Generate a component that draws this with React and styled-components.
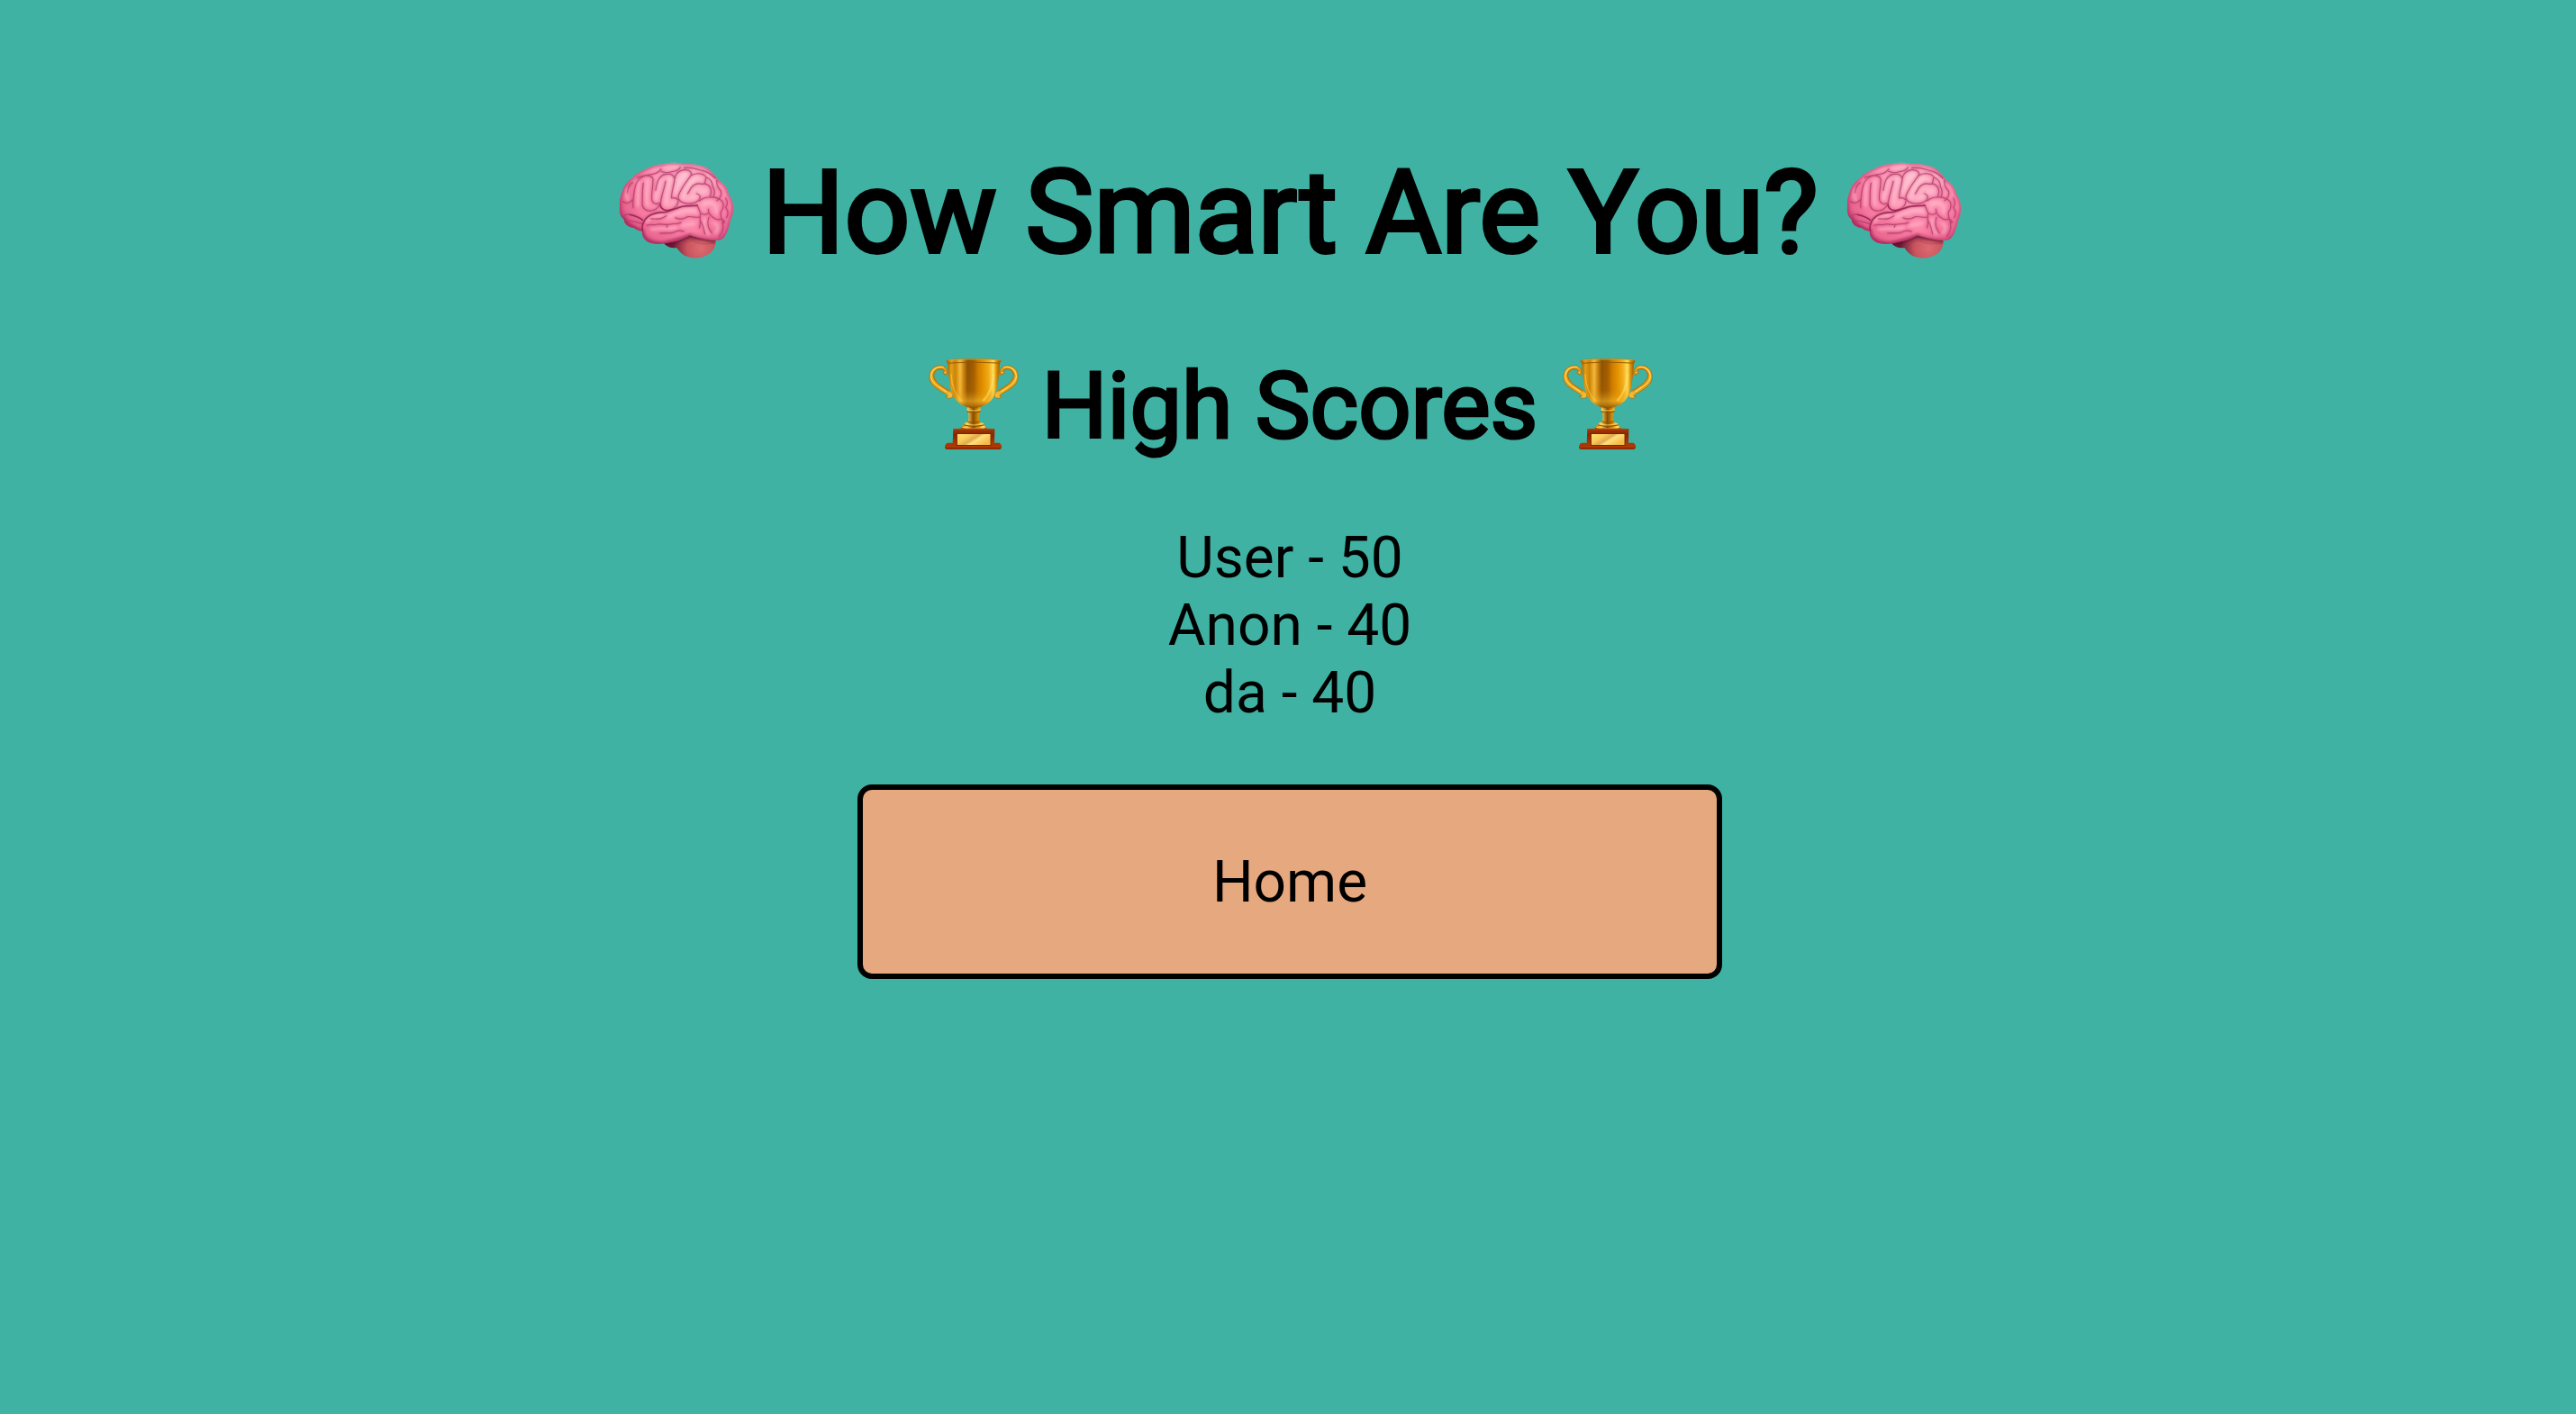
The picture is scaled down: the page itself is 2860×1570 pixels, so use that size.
import React from "react";
import styled, { createGlobalStyle } from "styled-components";

const GlobalStyle = createGlobalStyle`
  body {
    margin: 0;
    background: #3fb2a3;
    color: #000;
    font-family: Roboto, sans-serif;
    font-size: 64px;
    line-height: 75px;
  }
`;

const Page = styled.main`
  display: flex;
  flex-direction: column;
  align-items: center;
  box-sizing: border-box;
  min-height: 1570px;
  padding: 161px 0 0 4px;
`;

const Heading = styled.h1`
  margin: 0 0 ${(p) => p.$gap}px;
  padding-left: ${(p) => p.$indent || 0}px;
  font-size: ${(p) => p.$size}px;
  line-height: ${(p) => p.$line}px;
  font-weight: 400;
  white-space: nowrap;
  -webkit-text-stroke: 0.03125em #000;
`;

const Emoji = styled.svg`
  width: 1em;
  height: 1em;
  overflow: visible;
  vertical-align: ${(p) => p.$drop}em;
`;

const Scores = styled.ul`
  margin: 0 0 64px;
  padding: 0;
  list-style: none;
  text-align: center;
`;

const Score = styled.li`
  height: 75px;
`;

const HomeButton = styled.button`
  box-sizing: border-box;
  width: 960px;
  height: 216px;
  padding: 0;
  border: 6px solid #000;
  border-radius: 16px;
  background: #e6a87e;
  color: #000;
  font: inherit;
`;

const BRAIN =
  "M54 207C52 180 61 164 66 148C73 132 88 120 99 111C112 96 133 89 151 80C166 71 186 69 200 68C215 62 248 62 264 67C288 66 310 68 322 72C345 77 354 86 365 98C376 109 381 119 391 127C408 138 413 151 416 166C426 178 433 198 432 218C433 237 424 251 421 263C417 284 410 302 401 312C393 320 384 322 373 321C343 322 309 310 288 305C264 319 236 326 211 330C188 336 163 335 147 326C132 317 127 302 129 290C121 293 111 286 101 280C84 279 69 269 68 251C54 244 53 224 54 207Z";

const CEREBELLUM =
  "M201 331C215 328 259 315 286 298C320 308 349 316 374 318C375 344 365 361 345 371C329 380 307 384 287 378C266 374 254 361 244 346C229 349 210 344 201 331Z";

const FOLDS = [
  "M67 251C64 236 75 233 88 236C104 240 118 243 130 254",
  "M78 257C92 252 108 262 127 266",
  "M129 290C124 267 136 246 158 235C171 229 187 225 199 229",
  "M99 213C96 196 100 176 103 155C108 128 119 110 141 106C153 105 164 110 166 121",
  "M64 192C78 202 88 196 98 186M79 163C82 145 88 134 97 129",
  "M133 131C129 150 130 174 129 198C129 215 141 225 158 223C172 222 182 214 187 203",
  "M165 121C165 150 157 174 162 190C167 202 178 202 188 197",
  "M174 155C178 128 184 107 205 102C222 98 236 104 237 117",
  "M207 125C203 151 190 178 190 202C192 219 209 226 224 219C238 215 248 205 249 191",
  "M237 117C235 142 225 163 227 181C234 179 243 181 249 187",
  "M237 117C239 100 252 88 272 86C288 88 297 96 290 107C276 127 258 148 249 174",
  "M249 174C247 190 262 199 282 199C302 201 318 192 322 180C322 172 318 168 310 166",
  "M290 107C306 95 332 97 344 112M329 134C314 130 300 136 292 146C288 155 284 160 280 166",
  "M329 134C342 132 352 137 357 149C360 161 360 168 353 178C342 178 330 181 320 190",
  "M337 134L341 114M344 112C358 118 364 130 364 142C370 150 372 165 366 177",
  "M378 122C374 137 383 148 391 157C395 172 388 182 378 189",
  "M353 178C371 176 386 182 396 192C402 205 398 218 391 227C387 242 396 252 400 264",
  "M199 229C215 228 229 222 244 216C266 206 287 208 311 205C318 212 318 222 323 230C334 239 345 235 351 230L349 217",
  "M351 230C359 242 369 250 381 253C392 249 401 252 404 262",
  "M157 250C169 248 184 254 196 247M196 247L210 240M240 246C254 254 268 250 280 243C296 240 310 249 323 243",
  "M144 272C156 266 168 273 180 268C194 266 208 272 222 268C236 264 244 270 258 262M214 268L211 278",
  "M188 298C206 296 220 301 236 294C246 288 256 288 268 292",
  "M323 230C319 250 326 266 319 280M323 258C334 270 334 288 338 300",
  "M351 245C344 264 350 284 360 296M396 262C402 280 396 296 386 308",
  "M112 113C132 103 152 104 168 100C182 98 186 92 192 84M192 92C205 98 217 98 232 92C246 90 252 86 256 78",
  "M268 80C292 76 310 84 332 90C350 94 360 104 372 114",
  "M407 181C414 192 413 204 407 212C416 222 416 234 410 246",
];

const HIGHLIGHTS = [
  "M118 128C112 152 116 178 114 205",
  "M146 122C143 150 142 179 146 202",
  "M190 121C183 144 177 167 175 184",
  "M222 116C214 143 207 171 209 198",
  "M268 101C254 119 247 137 240 158",
  "M310 112C286 130 272 151 267 178",
  "M292 178C310 182 318 158 338 158",
  "M336 200C364 190 380 205 376 228",
  "M145 259C158 241 176 242 198 238",
  "M213 244C236 235 249 228 267 223C282 219 296 222 305 225",
  "M338 255C332 268 338 285 350 299",
  "M345 104C358 108 364 124 372 135",
  "M82 188C76 177 74 164 80 151",
  "M160 284C190 282 216 284 240 280M264 272L300 266",
  "M372 266C384 274 384 286 374 296",
];

/* Pink anatomical brain seen from the side */
const Brain = ({ id }) => (
  <Emoji viewBox="51 40 384 384" $drop={-0.166} role="img" aria-label="brain">
    <defs>
      <radialGradient id={`${id}-base`} gradientUnits="userSpaceOnUse" cx="275" cy="115" r="250">
        <stop offset="0" stopColor="#ffc0cf" />
        <stop offset="0.35" stopColor="#ffa4be" />
        <stop offset="0.68" stopColor="#fc84a8" />
        <stop offset="0.9" stopColor="#e8658f" />
        <stop offset="1" stopColor="#c44474" />
      </radialGradient>
      <radialGradient id={`${id}-stem`} gradientUnits="userSpaceOnUse" cx="325" cy="348" r="95">
        <stop offset="0" stopColor="#dd6b70" />
        <stop offset="0.5" stopColor="#c9545f" />
        <stop offset="1" stopColor="#6b1732" />
      </radialGradient>
      <clipPath id={`${id}-clip`}>
        <path d={BRAIN} />
      </clipPath>
      <clipPath id={`${id}-stem-clip`}>
        <path d={CEREBELLUM} />
      </clipPath>
      <filter id={`${id}-soft`} x="-20%" y="-20%" width="140%" height="140%">
        <feGaussianBlur stdDeviation="4" />
      </filter>
      <filter id={`${id}-crease`} x="-20%" y="-20%" width="140%" height="140%">
        <feGaussianBlur stdDeviation="1" />
      </filter>
    </defs>
    <path d={CEREBELLUM} fill={`url(#${id}-stem)`} />
    <g clipPath={`url(#${id}-stem-clip)`} fill="none">
      <path d="M242 344C262 336 272 325 296 323C322 337 350 334 370 331" stroke="#9a3a4c" strokeWidth="2.5" opacity="0.5" />
      <path d="M202 331L286 307L374 322" stroke="#5a1030" strokeWidth="15" opacity="0.7" filter={`url(#${id}-soft)`} />
    </g>
    <path d={BRAIN} fill={`url(#${id}-base)`} />
    <g clipPath={`url(#${id}-clip)`} fill="none" strokeLinecap="round" strokeLinejoin="round">
      <path d={FOLDS.join("")} stroke="#d0447a" strokeWidth="8" opacity="0.55" filter={`url(#${id}-soft)`} />
      <path d={HIGHLIGHTS.join("")} stroke="#ffc8d6" strokeWidth="11" opacity="0.45" filter={`url(#${id}-soft)`} />
      <path d={BRAIN} stroke="#a82459" strokeWidth="11" opacity="0.5" filter={`url(#${id}-soft)`} />
      <path d="M68 251C80 272 104 280 129 290C132 322 160 334 205 331L288 307" stroke="#9c1b50" strokeWidth="12" opacity="0.5" filter={`url(#${id}-soft)`} />
      <path d={FOLDS.join("")} stroke="#b03f69" strokeWidth="3.4" opacity="0.8" filter={`url(#${id}-crease)`} />
      <path
        d="M130 290C126 266 139 246 161 236C180 228 193 229 210 227C230 220 246 213 260 209C283 204 296 209 313 205M88 236C104 240 118 243 130 254M189 203C191 219 209 226 224 219"
        stroke="#8c1f4b"
        strokeWidth="4.5"
        opacity="0.75"
        filter={`url(#${id}-crease)`}
      />
    </g>
  </Emoji>
);

/* Gold two-handled cup on a wooden plinth */
const Trophy = ({ id }) => (
  <Emoji viewBox="58 50 307 307" $drop={-0.13} role="img" aria-label="trophy">
    <defs>
      <linearGradient id={`${id}-cup`} gradientUnits="userSpaceOnUse" x1="127" y1="0" x2="302" y2="0">
        <stop offset="0" stopColor="#a96100" />
        <stop offset="0.07" stopColor="#e59f18" />
        <stop offset="0.15" stopColor="#cb8306" />
        <stop offset="0.24" stopColor="#f5bb3c" />
        <stop offset="0.31" stopColor="#c98110" />
        <stop offset="0.38" stopColor="#8d5203" />
        <stop offset="0.5" stopColor="#a55d00" />
        <stop offset="0.58" stopColor="#cd7c00" />
        <stop offset="0.68" stopColor="#e59200" />
        <stop offset="0.78" stopColor="#f3ac18" />
        <stop offset="0.87" stopColor="#ffe05d" />
        <stop offset="0.93" stopColor="#d99009" />
        <stop offset="1" stopColor="#9c5500" />
      </linearGradient>
      <linearGradient id={`${id}-shade`} x1="0" y1="0" x2="0" y2="1">
        <stop offset="0" stopColor="#d18700" stopOpacity="0" />
        <stop offset="0.6" stopColor="#d18700" stopOpacity="0.1" />
        <stop offset="0.84" stopColor="#f2b82b" stopOpacity="0.55" />
        <stop offset="1" stopColor="#8f4f00" stopOpacity="0.9" />
      </linearGradient>
      <linearGradient id={`${id}-stem`} x1="0" y1="0" x2="1" y2="0">
        <stop offset="0" stopColor="#b06a00" />
        <stop offset="0.25" stopColor="#ffd252" />
        <stop offset="0.48" stopColor="#8a4c00" />
        <stop offset="0.7" stopColor="#e49a0a" />
        <stop offset="0.86" stopColor="#ffe36a" />
        <stop offset="1" stopColor="#a35c00" />
      </linearGradient>
      <linearGradient id={`${id}-wood`} x1="0" y1="0" x2="0" y2="1">
        <stop offset="0" stopColor="#a63a06" />
        <stop offset="0.3" stopColor="#8a2600" />
        <stop offset="0.75" stopColor="#ad3905" />
        <stop offset="1" stopColor="#8d2700" />
      </linearGradient>
      <linearGradient id={`${id}-plate`} x1="0" y1="0" x2="1" y2="0.55">
        <stop offset="0" stopColor="#ffe26e" />
        <stop offset="0.36" stopColor="#f8ca5a" />
        <stop offset="0.56" stopColor="#e1a84d" />
        <stop offset="0.68" stopColor="#ffdf7c" />
        <stop offset="1" stopColor="#f4ba46" />
      </linearGradient>
      <linearGradient id={`${id}-handle`} x1="0" y1="0" x2="1" y2="1">
        <stop offset="0" stopColor="#f2b22c" />
        <stop offset="0.5" stopColor="#e09a12" />
        <stop offset="1" stopColor="#f6c23e" />
      </linearGradient>
      <g id={`${id}-arm`}>
        <path
          d="M127 105C130 89 119 77 102 77C78 77 64 97 67 120C71 145 96 157 119 170C131 177 129 181 120 180C124 188 144 188 145 176C145 162 119 153 101 140C85 128 79 118 82 104C85 90 97 86 109 90C116 92 115 96 111 98C117 109 124 109 127 105Z"
          fill={`url(#${id}-handle)`}
          stroke="#a76300"
          strokeWidth="2"
        />
        <path d="M114 82C94 76 74 89 72 112C74 137 101 149 123 164" fill="none" stroke="#ffdf68" strokeWidth="3" />
        <path d="M117 93C103 82 84 88 79 109C83 133 111 147 131 163" fill="none" stroke="#b87504" strokeWidth="3" />
        <circle cx="119" cy="100" r="4" fill="#ffe175" stroke="#a76300" strokeWidth="2" />
      </g>
    </defs>
    <use href={`#${id}-arm`} />
    <use href={`#${id}-arm`} transform="translate(428 0) scale(-1 1)" />
    <path d="M196 214L193 219L191 225L196 231C198 246 198 256 195 264L183 269C176 275 177 280 170 284L174 292H255L259 285C252 282 252 275 247 270L233 264C230 250 231 241 233 231L238 225L236 219L232 214Z" fill={`url(#${id}-stem)`} />
    <path d="M191 229C204 234 223 234 237 229M194 263C206 268 220 268 234 263M181 274C199 280 230 280 250 274M172 286C200 291 229 291 257 286" fill="none" stroke="#8c5100" strokeWidth="3" />
    <path d="M193 223C207 228 224 228 235 223M185 271C203 276 226 276 243 271M176 282C199 287 227 287 253 282" fill="none" stroke="#ffd65a" strokeWidth="2.5" />
    <path d="M127 66C130 104 132 145 144 173C156 201 184 217 214 218C245 217 272 201 284 173C296 145 299 104 301 66Z" fill={`url(#${id}-cup)`} />
    <path d="M127 66C130 104 132 145 144 173C156 201 184 217 214 218C245 217 272 201 284 173C296 145 299 104 301 66Z" fill={`url(#${id}-shade)`} />
    <path d="M139 107C141 143 151 174 174 195" fill="none" stroke="#ffd454" strokeWidth="4" strokeLinecap="round" opacity="0.5" />
    <path d="M280 106C276 151 265 175 247 192" fill="none" stroke="#ffe66d" strokeWidth="7" strokeLinecap="round" opacity="0.5" />
    <path d="M125 58C151 53 277 53 303 58C305 61 304 67 299 70C269 65 157 65 130 70C124 67 123 62 125 58Z" fill={`url(#${id}-cup)`} stroke="#ae6900" strokeWidth="1.5" />
    <path d="M126 59C157 55 273 55 302 59" fill="none" stroke="#e0a325" strokeWidth="2.5" />
    <path d="M131 69C160 65 269 65 298 69" fill="none" stroke="#8e5000" strokeWidth="2" />
    <path d="M146 287Q214 284 284 287L283 334H299Q307 337 307 349Q306 356 299 356H127Q119 356 118 348Q119 336 128 334H144Z" fill={`url(#${id}-wood)`} />
    <path d="M147 289H281M121 346H304" stroke="#b8440a" strokeWidth="3" />
    <path d="M158 303H271V342H158Z" fill={`url(#${id}-plate)`} stroke="#7b2500" strokeWidth="3" />
  </Emoji>
);

const scores = [
  { name: "User", score: 50 },
  { name: "Anon", score: 40 },
  { name: "da", score: 40 },
];

export default function App() {
  return (
    <>
      <GlobalStyle />
      <Page>
        <Heading $size={128} $line={150} $gap={80} $indent={1}>
          <Brain id="brain-left" /> How Smart Are You? <Brain id="brain-right" />
        </Heading>
        <Heading as="h2" $size={102.4} $line={120} $gap={71}>
          <Trophy id="trophy-left" /> High Scores <Trophy id="trophy-right" />
        </Heading>
        <Scores>
          {scores.map(({ name, score }) => (
            <Score key={name}>{`${name} - ${score}`}</Score>
          ))}
        </Scores>
        <HomeButton type="button">Home</HomeButton>
      </Page>
    </>
  );
}
